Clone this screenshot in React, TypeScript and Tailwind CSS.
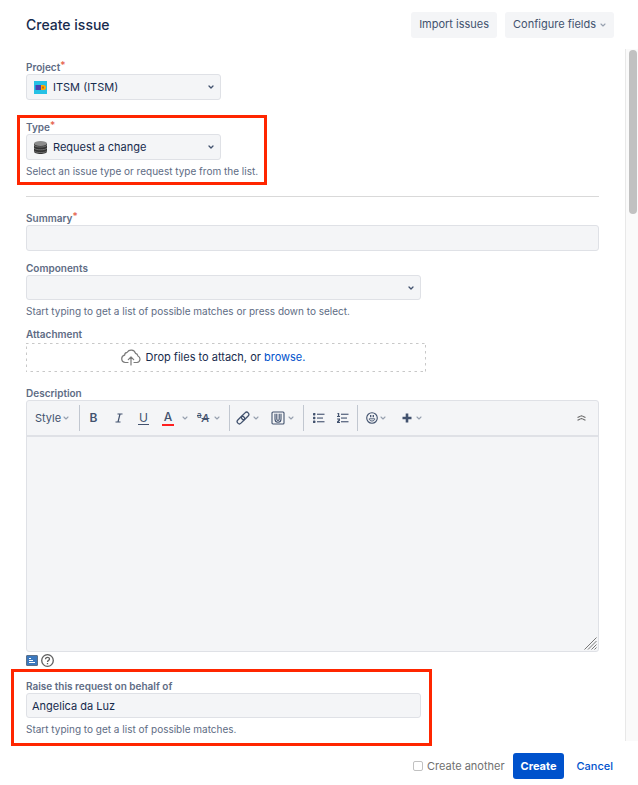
import React from 'react';

// ============================================================
// Icons
// ============================================================

function Chevron({ bold = false }: { bold?: boolean }) {
  return (
    <svg
      className={bold ? 'h-[6px] w-[6px] shrink-0 text-[#42526e]' : 'h-[6px] w-[6px] shrink-0 text-[#97a0af]'}
      viewBox="0 0 6 6"
      fill="none"
      stroke="currentColor"
      strokeWidth={bold ? 1.3 : 1.1}
      strokeLinecap="round"
      strokeLinejoin="round"
    >
      <path d="M1 2l2 2 2-2" />
    </svg>
  );
}

function ProjectIcon() {
  return (
    <svg className="h-[13px] w-[13px] shrink-0" viewBox="0 0 13 13">
      <rect width="13" height="13" fill="#25c1e5" />
      <rect x="1.500" y="4" width="6" height="5" fill="#4a3fb0" />
      <path d="M7 4h2.500a2.500 2.500 0 010 5H7z" fill="#ffab00" />
      <rect x="8" y="5.500" width="2" height="2" fill="#c76a12" />
    </svg>
  );
}

function DatabaseIcon() {
  return (
    <svg className="h-[13px] w-[13px] shrink-0" viewBox="0 0 13 13">
      <path d="M0 2.500v8C0 11.900 2.900 13 6.500 13S13 11.900 13 10.500v-8z" fill="#333" />
      <ellipse cx="6.500" cy="2.500" rx="6.500" ry="2.400" fill="#8c8c8c" />
      <path
        d="M0 4.200c1 1.400 3.500 1.800 6.500 1.800S12 5.600 13 4.200M0 7c1 1.400 3.500 1.800 6.500 1.800S12 8.400 13 7M0 9.800c1 1.400 3.500 1.700 6.500 1.700s5.500-.3 6.500-1.700"
        fill="none"
        stroke="#999"
        strokeWidth=".6"
      />
    </svg>
  );
}

function CloudUploadIcon() {
  return (
    <svg
      className="h-[17px] w-5 shrink-0 text-[#7a7a7a]"
      viewBox="0 0 20 17"
      fill="none"
      stroke="currentColor"
      strokeWidth="1.200"
      strokeLinecap="round"
      strokeLinejoin="round"
    >
      <path d="M7 13.500H4.300A3.700 3.700 0 013.600 6.200 3 3 0 016.200 3.300 4.600 4.600 0 0114.500 4.300 3.200 3.200 0 0116.900 7 3.400 3.400 0 0116 13.500h-3" />
      <path d="M10 16V8M7.300 10.600L10 8l2.700 2.600" />
    </svg>
  );
}

function ItalicIcon() {
  return (
    <svg className="h-[10px] w-2" viewBox="0 0 8 10" fill="none" stroke="currentColor" strokeWidth="1.200">
      <path d="M2.500 1h5M.5 9h5M5 1L3 9" />
    </svg>
  );
}

function LinkIcon() {
  return (
    <svg className="h-[14px] w-[14px]" viewBox="0 0 14 14" fill="none" stroke="currentColor" strokeWidth="1.300">
      <g transform="rotate(-45 7 7)">
        <rect x="-.3" y="4.800" width="8.600" height="4.400" rx="2.200" />
        <rect x="5.700" y="4.800" width="8.600" height="4.400" rx="2.200" />
      </g>
    </svg>
  );
}

function AttachIcon() {
  return (
    <svg className="h-[14px] w-[14px]" viewBox="0 0 14 14" fill="none" stroke="currentColor" strokeWidth="1.100">
      <rect x="1" y="1" width="12" height="12" rx="1" />
      <path d="M4 2.800v5.500a3 3 0 006 0V2.800M8.200 2.800v5.400a1.200 1.200 0 01-2.400 0V2.800" />
    </svg>
  );
}

function BulletListIcon() {
  return (
    <svg className="h-[10px] w-[12px]" viewBox="0 0 12 10" fill="currentColor">
      <rect x="0" y="0" width="2.400" height="2.400" rx=".6" />
      <rect x="0" y="3.800" width="2.400" height="2.400" rx=".6" />
      <rect x="0" y="7.600" width="2.400" height="2.400" rx=".6" />
      <rect x="4" y=".7" width="7.500" height="1.100" />
      <rect x="4" y="4.500" width="6" height="1.100" />
      <rect x="4" y="8.200" width="7.500" height="1.100" />
    </svg>
  );
}

function NumberListIcon() {
  return (
    <svg className="h-[10px] w-[12px]" viewBox="0 0 12 10" fill="currentColor">
      <path d="M.7 0h1.500v3H3v1H0V3h.9V1H.2zM0 5.500h3v2L1.800 9H3v1H0V8.500l1.500-1.600v-.4H0z" />
      <rect x="4" y=".7" width="7.500" height="1.100" />
      <rect x="4" y="4.500" width="6" height="1.100" />
      <rect x="4" y="8.200" width="7.500" height="1.100" />
    </svg>
  );
}

function SmileIcon() {
  return (
    <svg className="h-[12px] w-[12px]" viewBox="0 0 12 12" fill="none" stroke="currentColor" strokeWidth="1.100">
      <circle cx="6" cy="6" r="5.300" />
      <path d="M4.700 3v2.300M7.300 3v2.300" strokeWidth="1.300" />
      <path d="M3.200 6.800h5.600C8.600 8.300 7.500 9 6 9S3.400 8.300 3.200 6.800z" strokeWidth=".9" />
    </svg>
  );
}

function PlusIcon() {
  return (
    <svg className="h-[10px] w-[10px]" viewBox="0 0 10 10" stroke="currentColor" strokeWidth="2.600">
      <path d="M5 .5v9M.5 5h9" />
    </svg>
  );
}

function CollapseIcon() {
  return (
    <svg className="h-[8px] w-[9px]" viewBox="0 0 9 8" fill="none" stroke="#6b6b6b" strokeWidth="1.100">
      <path d="M.5 3.600C2 3 3 2.200 4.500 1.800 6 2.200 7 3 8.500 3.600M.5 6.300C2 5.700 3 4.900 4.500 4.500 6 4.900 7 5.700 8.500 6.300" />
    </svg>
  );
}

function ResizeGrip() {
  return (
    <svg
      className="pointer-events-none absolute right-px bottom-px h-[13px] w-[13px]"
      viewBox="0 0 13 13"
      stroke="#777"
      strokeWidth="1"
    >
      <path d="M.5 12.500l12-12M4 12.500L12.500 4M7.500 12.500l5-5M10.500 12.500l2-2" />
    </svg>
  );
}

// ============================================================
// Form parts
// ============================================================

function FieldLabel({ htmlFor, required, children }: { htmlFor: string; required?: boolean; children: React.ReactNode }) {
  return (
    <label htmlFor={htmlFor} className="flex h-[14px] text-[10px] leading-[14px] font-semibold text-[#5e6c84]">
      {children}
      {required && <span className="-mt-px font-medium leading-3 text-[#e5604a]">*</span>}
    </label>
  );
}

function HelpText({ children }: { children: React.ReactNode }) {
  return <p className="mt-1 text-[10px] leading-[14px] whitespace-nowrap text-[#5e6c84]">{children}</p>;
}

// Red frame that calls out a group of fields
function Callout({ className }: { className: string }) {
  return <div className={`pointer-events-none absolute border-3 border-[#ff2600] ${className}`} />;
}

function IconSelect({ id, icon, value }: { id: string; icon: React.ReactNode; value: string }) {
  return (
    <div className="flex h-[26px] w-[195px] items-center rounded-[3px] border border-[#dfe1e6] bg-[#f4f5f7] pr-1.5 pl-[7px]">
      {icon}
      <select id={id} className="min-w-0 flex-1 appearance-none bg-transparent pl-1.5 text-[11px] text-[#172b4d] outline-none">
        <option>{value}</option>
      </select>
      <Chevron bold />
    </div>
  );
}

function ToolButton({ label, className, children }: { label: string; className: string; children: React.ReactNode }) {
  return (
    <button type="button" aria-label={label} className={`flex h-[26px] items-center text-xs text-[#42526e] ${className}`}>
      {children}
    </button>
  );
}

function Toolbar() {
  return (
    <div className="flex h-9 items-center border-b-2 border-[#dfe1e6]">
      <ToolButton label="Style" className="w-[52px] gap-[2px] pl-2">
        <span className="text-[11px]">Style</span>
        <Chevron />
      </ToolButton>
      <div className="flex border-l border-[#c1c7d0] pl-px">
        <ToolButton label="Bold" className="w-[25px] justify-center font-semibold">B</ToolButton>
        <ToolButton label="Italic" className="w-[25px] justify-center"><ItalicIcon /></ToolButton>
        <ToolButton label="Underline" className="w-[25px] justify-center">
          <span className="border-b border-[#42526e] px-px leading-3">U</span>
        </ToolButton>
        <ToolButton label="Text color" className="w-[34px] gap-2 pl-1.5">
          <span className="w-3 border-b-2 border-[#ff1f1f] text-center leading-[14px] font-medium">A</span>
          <Chevron />
        </ToolButton>
        <ToolButton label="More formatting" className="w-[39px] gap-[3px] pl-[7px]">
          <span className="flex w-[14px] items-center font-medium">
            <span className="-mt-1.5 text-[8px] leading-3 line-through">a</span>
            <span className="text-[11px] italic line-through">A</span>
          </span>
          <Chevron />
        </ToolButton>
      </div>
      <div className="flex border-l border-[#c1c7d0]">
        <ToolButton label="Link" className="w-[35px] gap-[3px] pl-1.5"><LinkIcon /><Chevron /></ToolButton>
        <ToolButton label="Attachment" className="w-[38px] gap-[3px] pl-1.5"><AttachIcon /><Chevron /></ToolButton>
      </div>
      <div className="flex border-l border-[#c1c7d0] px-[2px]">
        <ToolButton label="Bullet list" className="w-[25px] justify-center"><BulletListIcon /></ToolButton>
        <ToolButton label="Numbered list" className="w-[24px] justify-center"><NumberListIcon /></ToolButton>
      </div>
      <div className="flex border-l border-[#c1c7d0]">
        <ToolButton label="Emoji" className="w-[36px] gap-[2px] pl-2"><SmileIcon /><Chevron /></ToolButton>
        <ToolButton label="Insert" className="w-[34px] gap-1 pl-2"><PlusIcon /><Chevron /></ToolButton>
      </div>
      <button type="button" aria-label="Collapse toolbar" className="mr-3 ml-auto">
        <CollapseIcon />
      </button>
    </div>
  );
}

// ============================================================
// Create issue dialog
// ============================================================

export default function App() {
  return (
    <form className="flex min-h-screen flex-col bg-white font-['Inter',sans-serif] text-[#172b4d]">
      <header className="flex h-[49px] items-center justify-between pr-6 pl-[26px]">
        <h1 className="text-[14px] font-medium">Create issue</h1>
        <div className="flex gap-2 text-[11px] text-[#42526e]">
          <button type="button" className="h-[26px] rounded-[3px] bg-[#f4f5f7] px-2">Import issues</button>
          <button type="button" className="flex h-[26px] items-center gap-1 rounded-[3px] bg-[#f4f5f7] px-2">
            Configure fields
            <Chevron />
          </button>
        </div>
      </header>

      <div className="flex flex-1">
        <main className="min-w-0 flex-1 pt-[11px] pr-[26px] pl-[26px]">
          <FieldLabel htmlFor="project" required>Project</FieldLabel>
          <IconSelect id="project" icon={<ProjectIcon />} value="ITSM (ITSM)" />

          <div className="relative mt-5 w-[232px]">
            <Callout className="-inset-x-[9px] -top-[5px] -bottom-[7px]" />
            <FieldLabel htmlFor="type" required>Type</FieldLabel>
            <IconSelect id="type" icon={<DatabaseIcon />} value="Request a change" />
            <HelpText>Select an issue type or request type from the list.</HelpText>
          </div>

          <hr className="mt-[18px] border-[#d9d9d9]" />

          <div className="mt-[14px]">
            <FieldLabel htmlFor="summary" required>Summary</FieldLabel>
            <input
              id="summary"
              className="block h-[26px] w-full rounded-[3px] border border-[#dfe1e6] bg-[#f4f5f7] px-1.5 text-[11px] outline-none"
            />
          </div>

          <div className="mt-[10px]">
            <FieldLabel htmlFor="components">Components</FieldLabel>
            <div className="flex h-[25px] max-w-[395px] items-center rounded-[3px] border border-[#dfe1e6] bg-[#f4f5f7] px-1.5">
              <input id="components" className="min-w-0 flex-1 bg-transparent text-[11px] outline-none" />
              <Chevron bold />
            </div>
            <HelpText>Start typing to get a list of possible matches or press down to select.</HelpText>
          </div>

          <div className="mt-[9px]">
            <FieldLabel htmlFor="attachment">Attachment</FieldLabel>
            <div className="relative mt-[2px] flex h-[29px] max-w-[400px] items-center justify-center gap-[5px] pr-[26px] text-[11px]">
              <svg className="pointer-events-none absolute inset-0 h-full w-full">
                <rect width="100%" height="100%" fill="none" stroke="#c8c8c8" strokeWidth="2" strokeDasharray="2.5 3.5" />
              </svg>
              <CloudUploadIcon />
              <span>
                Drop files to attach, or{' '}
                <label htmlFor="attachment" className="cursor-pointer text-[#0052cc]">browse.</label>
              </span>
              <input id="attachment" type="file" className="sr-only" />
            </div>
          </div>

          <div className="mt-[14px]">
            <FieldLabel htmlFor="description">Description</FieldLabel>
            <div className="relative rounded-[3px] border border-[#dfe1e6] bg-[#f4f5f7]">
              <Toolbar />
              <textarea
                id="description"
                className="block h-[214px] w-full resize-none bg-transparent p-1.5 text-[11px] outline-none"
              />
              <ResizeGrip />
            </div>
            <div className="mt-px flex h-[14px] items-center gap-[3px]">
              <button type="button" aria-label="Preview">
                <svg className="block h-[11px] w-3" viewBox="0 0 12 11">
                  <rect x=".5" y=".5" width="11" height="10" rx=".5" fill="#3b78be" stroke="#5b6f88" />
                  <path d="M3 3.500h2M3 5.500h4M3 7.500h6" stroke="#fff" fill="none" />
                </svg>
              </button>
              <button type="button" aria-label="Help">
                <svg className="block h-[13px] w-[13px]" viewBox="0 0 13 13" fill="none" stroke="#5f5f5f" strokeWidth="1.300">
                  <circle cx="6.500" cy="6.500" r="5.800" />
                  <path d="M4.500 5.200C4.500 2.700 8.500 2.700 8.500 5c0 1.400-2 1.400-2 3M6.500 9v1.300" />
                </svg>
              </button>
            </div>
          </div>

          <div className="relative mt-3 max-w-[395px]">
            <Callout className="-top-[10px] -right-[11px] -bottom-[10px] -left-[15px]" />
            <FieldLabel htmlFor="behalf">Raise this request on behalf of</FieldLabel>
            <input
              id="behalf"
              defaultValue="Angelica da Luz"
              className="block h-[25px] w-full rounded-[3px] border border-[#dfe1e6] bg-[#f4f5f7] px-[5px] text-[11px] outline-none"
            />
            <HelpText>Start typing to get a list of possible matches.</HelpText>
          </div>
        </main>

        <div className="w-[13px] border-l border-[#e8e8e8] bg-[#fafafa] pt-px pl-[3px]">
          <div className="h-[164px] w-2 rounded-full bg-[#c1c1c1]" />
        </div>
      </div>

      <footer className="flex h-[44px] items-center justify-end pt-[6px] pr-[25px] text-[11px]">
        <label className="flex items-center gap-1 text-[#707070]">
          <input type="checkbox" className="h-[10px] w-[10px] appearance-none rounded-[2px] border border-[#c1c1c1] bg-white" />
          Create another
        </label>
        <button type="submit" className="ml-2 h-[26px] rounded-[3px] bg-[#0052cc] px-2 font-bold text-white">Create</button>
        <a href="#" className="ml-3 font-medium text-[#0052cc]">Cancel</a>
      </footer>
    </form>
  );
}
